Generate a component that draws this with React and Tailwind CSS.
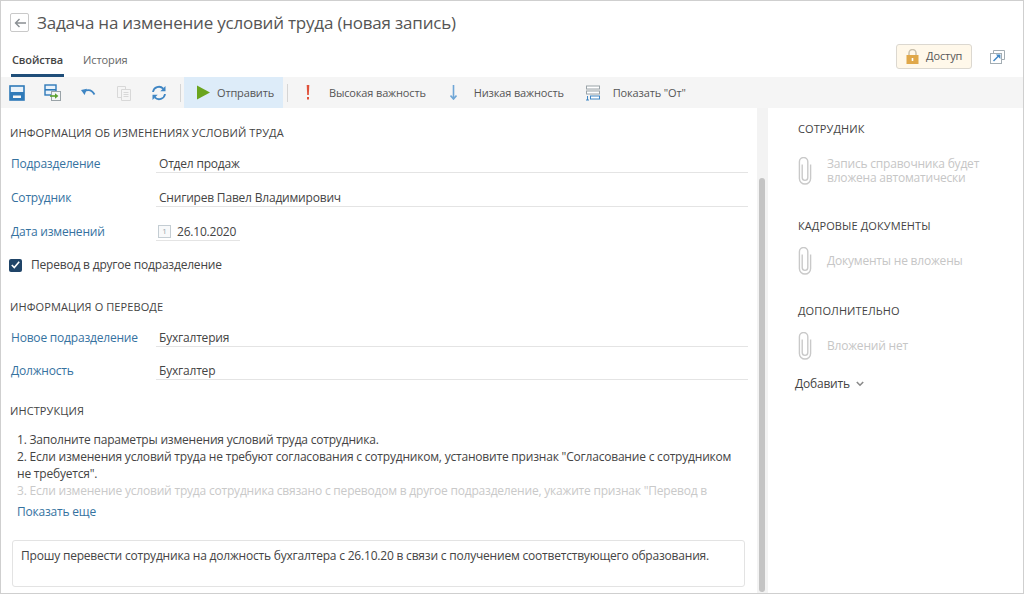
import React from "react";

const font = { fontFamily: '"Open Sans", "Noto Sans", sans-serif' };

const Paperclip = () => (
  <svg width="14" height="28" viewBox="0 0 14 30" fill="none" stroke="#c9c9c9" strokeWidth="1.5" className="shrink-0">
    <path d="M13 8v15a6 6 0 0 1-12 0V5a4.5 4.5 0 0 1 9 0v17a3 3 0 0 1-6 0V8" />
  </svg>
);

const SaveIcon = () => (
  <svg width="16" height="16" viewBox="0 0 16 16" fill="none">
    <rect x="1" y="1" width="14" height="14" fill="#e9f2fa" stroke="#2f7ab9" strokeWidth="1.6" />
    <rect x="1" y="7" width="14" height="2.4" fill="#2f7ab9" />
    <rect x="1" y="9" width="14" height="6" fill="#2f7ab9" />
    <rect x="4" y="10.5" width="8" height="3" fill="#f5f5f5" />
    <rect x="4" y="13" width="8" height="2" fill="#2f7ab9" />
  </svg>
);

const SaveCloseIcon = () => (
  <svg width="18" height="18" viewBox="0 0 18 18" fill="none">
    <rect x="1" y="1" width="11" height="10" fill="#e9f2fa" stroke="#2f7ab9" strokeWidth="1.4" />
    <rect x="1" y="5" width="11" height="1.6" fill="#2f7ab9" />
    <rect x="7.5" y="7.5" width="9" height="9" fill="#f5f5f5" stroke="#9aa3a8" />
    <path d="M6 12h6.5" stroke="#5aa02c" strokeWidth="1.6" />
    <path d="M11 9.2l3.4 2.8-3.4 2.8z" fill="#5aa02c" />
  </svg>
);

const UndoIcon = () => (
  <svg width="16" height="16" viewBox="0 0 16 16" fill="none">
    <path d="M4 6.5c4-2.2 8-1.5 10.5 3" stroke="#3f86c4" strokeWidth="1.8" />
    <path d="M1 5l6-1.2L4.6 10z" fill="#3f86c4" />
  </svg>
);

const CopyIcon = () => (
  <svg width="14" height="16" viewBox="0 0 14 16" fill="none" stroke="#d8d8d8">
    <path d="M.5 1.5h8v11h-8z" />
    <path d="M4.5 4.5h9v11h-9z" fill="#f5f5f5" />
    <path d="M6.5 7.5h5M6.5 9.5h5M6.5 11.5h5" />
  </svg>
);

const RefreshIcon = () => (
  <svg width="16" height="16" viewBox="0 0 16 16" fill="none">
    <path d="M2 7a6 6 0 0 1 10.2-3.4" stroke="#3f86c4" strokeWidth="1.8" />
    <path d="M14.5 1v5.2H9.3z" fill="#3f86c4" />
    <path d="M14 9a6 6 0 0 1-10.2 3.4" stroke="#3f86c4" strokeWidth="1.8" />
    <path d="M1.5 15V9.8h5.2z" fill="#3f86c4" />
  </svg>
);

const ShowFromIcon = () => (
  <svg width="16" height="16" viewBox="0 0 16 16" fill="none">
    <rect x="1.5" y="1" width="13" height="3" fill="#fff" stroke="#9aa3a8" />
    <rect x="1.5" y="6" width="13" height="3" fill="#fff" stroke="#9aa3a8" />
    <rect x="5.5" y="11" width="9" height="3" fill="#fff" stroke="#3f86c4" />
    <path d="M2.5 11v4M1 15h3" stroke="#3f86c4" />
  </svg>
);

const LockIcon = () => (
  <svg width="13" height="15" viewBox="0 0 13 15" fill="none">
    <path d="M3 7V4a3.5 3.5 0 0 1 7 0v3" stroke="#c9c0ad" strokeWidth="1.5" />
    <rect x="0.5" y="6" width="12" height="9" fill="#e0a84a" />
    <rect x="5.7" y="9" width="1.6" height="3" fill="#fff" />
  </svg>
);

const OpenIcon = () => (
  <svg width="15" height="14" viewBox="0 0 15 14" fill="none">
    <path d="M3.5 3.5V.5h11v9h-3" stroke="#a3adb3" />
    <rect x=".5" y="3.5" width="11" height="10" fill="#fff" stroke="#a3adb3" />
    <path d="M3.5 11L9 5.5" stroke="#3f86c4" strokeWidth="1.5" />
    <path d="M5.8 4.5h4.6v4.6z" fill="#3f86c4" />
  </svg>
);

const Field = ({ label, value, height = "h-[34px]" }) => (
  <div className={`flex items-end ${height}`}>
    <div className="w-[155px] pl-[10px] leading-[18px] text-[#35729f]">{label}</div>
    <div className="flex-1 mr-[9px] pl-[3px] pt-[2px] leading-[16px] border-b border-[#e4e4e4] text-[#444]">{value}</div>
  </div>
);

const Attach = ({ title, text, className, clipTop }) => (
  <div className={className}>
    <div className="pl-[30px] leading-[14px] text-[11px] tracking-[0.1px] text-[#444]">{title}</div>
    <div className={`flex items-center pl-[30px] ${clipTop}`}>
      <Paperclip />
      <div className="ml-[15px] leading-[14px] text-[#c6c6c6]">{text}</div>
    </div>
  </div>
);

const ToolLabel = ({ icon, label, className }) => (
  <div className={`flex items-center h-full ${className}`}>
    {icon}
    <span className="pt-[2px] text-[#555] text-[11px] tracking-[-0.15px]">{label}</span>
  </div>
);

const SectionTitle = ({ className, children }) => (
  <div className={`h-[14px] pt-[1px] pl-[9px] leading-[14px] text-[11px] tracking-[0.1px] text-[#444] ${className}`}>{children}</div>
);

export default function App() {
  return (
    <div style={font} className="w-[1024px] h-[594px] flex flex-col overflow-hidden bg-white border border-[#cfcfcf] text-[12px] tracking-[-0.2px] text-[#444]">
      <div className="h-[76px] shrink-0 flex flex-col">
        <div className="flex items-center h-[43px] pl-[9px]">
          <div className="w-[19px] h-[19px] flex items-center justify-center border border-[#c9c9c9] rounded-[2px]">
            <svg width="12" height="10" viewBox="0 0 12 10" fill="none" stroke="#8a8f93" strokeWidth="1.4">
              <path d="M12 5H1.5M5.5 1L1.5 5l4 4" />
            </svg>
          </div>
          <h1 className="ml-[8px] text-[17px] tracking-[-0.2px] text-[#555]">Задача на изменение условий труда (новая запись)</h1>
        </div>
        <div className="flex flex-1">
          <div className="ml-[10px] w-[53px] h-full flex flex-col items-center justify-end pb-[5px] border-b-[3px] border-[#1f4e79]">
            <span className="leading-[18px] text-[11px] font-semibold tracking-[-0.1px] text-[#444]">Свойства</span>
          </div>
          <div className="ml-[19px] flex flex-col justify-end pb-[8px]">
            <span className="leading-[18px] text-[11px] tracking-[-0.1px] text-[#666]">История</span>
          </div>
          <div className="ml-auto flex items-start">
            <div className="w-[76px] h-[25px] flex items-center pl-[9px] gap-[7px] bg-[#fff8ea] border border-[#dcd8d0] rounded-[3px] text-[11px] tracking-[-0.1px] text-[#555]">
              <LockIcon />
              <span>Доступ</span>
            </div>
            <div className="ml-[18px] mr-[18px] mt-[6px]">
              <OpenIcon />
            </div>
          </div>
        </div>
      </div>

      <div className="h-[31px] shrink-0 flex items-center bg-[#f5f5f5]">
        <div className="ml-[8px]"><SaveIcon /></div>
        <div className="ml-[19px]"><SaveCloseIcon /></div>
        <div className="ml-[18px]"><UndoIcon /></div>
        <div className="ml-[21px]"><CopyIcon /></div>
        <div className="ml-[20px]"><RefreshIcon /></div>
        <div className="ml-[13px] w-px h-[18px] bg-[#d5d5d5]" />
        <div className="ml-[3px] w-[99px] h-full flex items-center pl-[13px] gap-[7px] bg-[#ddecf9]">
          <svg width="13" height="15" viewBox="0 0 14 15"><path d="M0 0l14 7.5L0 15z" fill="#6aa51e" /></svg>
          <span className="pt-[2px] text-[#555] text-[11px] tracking-[-0.15px]">Отправить</span>
        </div>
        <div className="ml-[4px] w-px h-[18px] bg-[#d5d5d5]" />
        <ToolLabel
          className="ml-[18px] gap-[19px]"
          icon={<svg width="4" height="15" viewBox="0 0 4 15"><path d="M.7 0h2.6L2.8 10H1.2z" fill="#e0513a" /><rect x="1" y="12" width="2" height="2.5" fill="#e0513a" /></svg>}
          label="Высокая важность"
        />
        <ToolLabel
          className="ml-[24px] gap-[17px]"
          icon={<svg width="7" height="15" viewBox="0 0 7 15"><path d="M3.5 0v13M.5 10.5l3 3.5 3-3.5" stroke="#6fa6d6" strokeWidth="1.6" fill="none" /></svg>}
          label="Низкая важность"
        />
        <ToolLabel className="ml-[21px] gap-[12px]" icon={<ShowFromIcon />} label='Показать "От"' />
      </div>

      <div className="flex flex-1 min-h-0">
        <div className="w-[756px] shrink-0 flex flex-col">
          <SectionTitle className="mt-[17px]">ИНФОРМАЦИЯ ОБ ИЗМЕНЕНИЯХ УСЛОВИЙ ТРУДА</SectionTitle>
          <Field label="Подразделение" value="Отдел продаж" />
          <Field label="Сотрудник" value="Снигирев Павел Владимирович" />
          <div className="flex items-end h-[34px]">
            <div className="w-[155px] pl-[10px] leading-[18px] text-[#35729f]">Дата изменений</div>
            <div className="w-[84px] flex items-center gap-[6px] pl-[2px] border-b border-[#e4e4e4]">
              <div className="w-[13px] h-[13px] flex items-center justify-center border border-[#c4cdd3] bg-[#f8f9fa] text-[8px] text-[#9aa7ad]">1</div>
              <span className="pt-[2px] leading-[16px]">26.10.2020</span>
            </div>
          </div>
          <div className="flex items-center mt-[15px] ml-[8px] gap-[9px]">
            <div className="w-[13px] h-[13px] rounded-[2px] bg-[#1f4468] flex items-center justify-center">
              <svg width="9" height="8" viewBox="0 0 9 8" fill="none" stroke="#fff" strokeWidth="1.6"><path d="M.8 4l2.5 2.6L8.2.8" /></svg>
            </div>
            <span className="leading-[18px]">Перевод в другое подразделение</span>
          </div>
          <SectionTitle className="mt-[25px]">ИНФОРМАЦИЯ О ПЕРЕВОДЕ</SectionTitle>
          <Field label="Новое подразделение" value="Бухгалтерия" />
          <Field label="Должность" value="Бухгалтер" height="h-[33px]" />
          <SectionTitle className="mt-[23px]">ИНСТРУКЦИЯ</SectionTitle>
          <div className="mt-[14px] ml-[16px] h-[68px] overflow-hidden whitespace-nowrap leading-[17px] text-[#444]">
            <div>1. Заполните параметры изменения условий труда сотрудника.</div>
            <div>2. Если изменения условий труда не требуют согласования с сотрудником, установите признак "Согласование с сотрудником<br />не требуется".</div>
            <div className="text-[#c9c9c9]">3. Если изменение условий труда сотрудника связано с переводом в другое подразделение, укажите признак "Перевод в</div>
          </div>
          <div className="ml-[16px] mt-[4px] leading-[18px] text-[#35729f]">Показать еще</div>
          <div className="ml-[11px] mr-[12px] mt-[19px] h-[47px] border border-[#e3e3e3] rounded-[3px] pl-[8px] pt-[6px] leading-[18px] text-[#444]">
            Прошу перевести сотрудника на должность бухгалтера с 26.10.20 в связи с получением соответствующего образования.
          </div>
        </div>
        <div className="w-[11px] shrink-0 bg-[#f3f3f3] flex pl-[2px]">
          <div className="w-[6px] mt-[70px] mb-[1px] rounded-[3px] bg-[#c4c4c4]" />
        </div>
        <div className="flex-1 flex flex-col">
          <Attach className="mt-[14px]" clipTop="mt-[21px]" title="СОТРУДНИК" text={<>Запись справочника будет<br />вложена автоматически</>} />
          <Attach className="mt-[34px]" clipTop="mt-[14px]" title="КАДРОВЫЕ ДОКУМЕНТЫ" text="Документы не вложены" />
          <Attach className="mt-[29px]" clipTop="mt-[14px]" title="ДОПОЛНИТЕЛЬНО" text="Вложений нет" />
          <div className="flex items-center gap-[6px] pl-[27px] mt-[15px] leading-[18px] text-[#444]">
            Добавить
            <svg width="8" height="6" viewBox="0 0 8 6" fill="none" stroke="#8a8a8a" strokeWidth="1.6"><path d="M.8 1l3.2 3.2L7.2 1" /></svg>
          </div>
        </div>
      </div>
    </div>
  );
}
